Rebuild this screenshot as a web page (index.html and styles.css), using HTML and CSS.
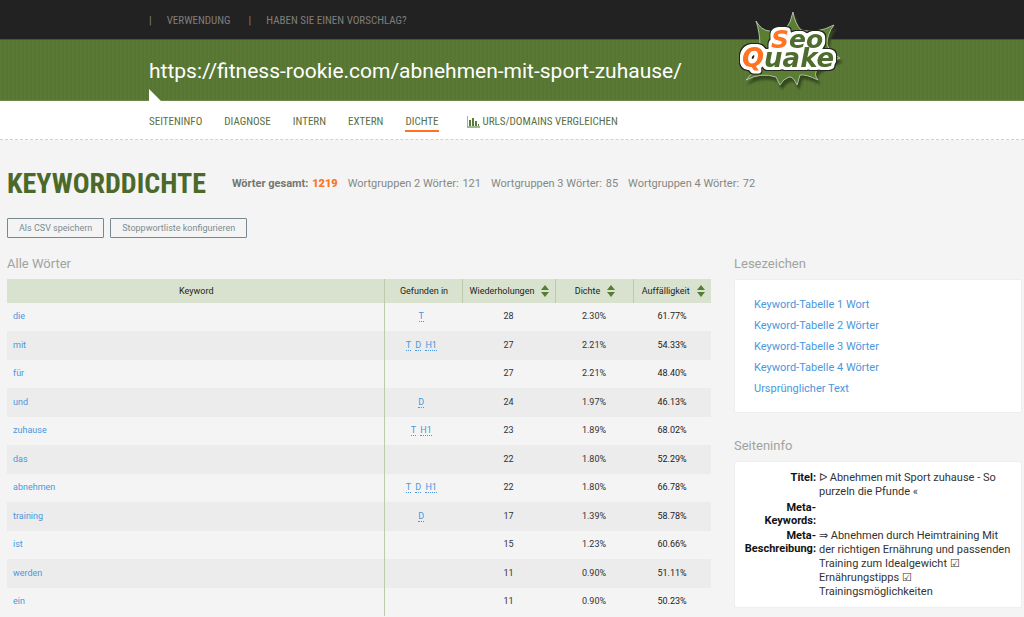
FILE: index.html
```html
<!DOCTYPE html>
<html lang="de">
<head>
<meta charset="utf-8">
<meta name="viewport" content="width=device-width, initial-scale=1">
<title>SEOquake – Keyworddichte</title>
<link rel="stylesheet" href="styles.css">
</head>
<body>
<header class="site-header">
  <nav class="top-links" aria-label="Hilfe">
    <span class="divider">|</span><a href="#verwendung">Verwendung</a>
    <span class="divider">|</span><a href="#vorschlag">Haben Sie einen Vorschlag?</a>
  </nav>
  <div class="banner">
    <p class="page-url">https://fitness-rookie.com/abnehmen-mit-sport-zuhause/</p>
  </div>
  <a class="logo" href="#start" aria-label="SeoQuake">
    <svg viewBox="0 0 112 88" width="112" height="88">
      <defs>
        <filter id="outline" x="-15%" y="-20%" width="130%" height="140%" color-interpolation-filters="sRGB">
          <feMorphology in="SourceAlpha" operator="dilate" radius="2"/>
          <feGaussianBlur stdDeviation="1"/>
          <feComponentTransfer result="edge"><feFuncA type="linear" slope="5" intercept="-0.5"/></feComponentTransfer>
          <feMorphology in="edge" operator="dilate" radius="1" result="rim"/>
          <feFlood flood-color="#22261c"/><feComposite in2="rim" operator="in" result="dark"/>
          <feFlood flood-color="#fff"/><feComposite in2="edge" operator="in" result="white"/>
          <feMerge><feMergeNode in="dark"/><feMergeNode in="white"/><feMergeNode in="SourceGraphic"/></feMerge>
        </filter>
      </defs>
      <path class="burst" d="M23 13Q28 22 36 23L52 22Q58 15 60 4Q62 16 68 22Q84 26 101 17Q94 26 94 36Q97 46 107 50Q96 54 85 61Q80 66 85 72Q73 66 67 67L64 77Q60 68 56 69Q50 71 47 77L43 69Q28 64 13 72Q19 67 21 60L27 40Q27 24 23 13Z"/>
      <g class="logo-words" filter="url(#outline)"><text x="38" y="40" class="logo-seo"><tspan class="accent">S</tspan>eo</text><text x="9" y="59" class="logo-quake"><tspan class="accent">Q</tspan>uake</text></g>
    </svg>
  </a>
  <nav class="tabs" aria-label="Bereiche">
    <a href="#seiteninfo">Seiteninfo</a>
    <a href="#diagnose">Diagnose</a>
    <a href="#intern">Intern</a>
    <a href="#extern">Extern</a>
    <a class="active" href="#dichte" aria-current="page">Dichte</a>
    <a class="compare" href="#vergleichen"><svg viewBox="0 0 13 12" width="13" height="12" aria-hidden="true"><path class="chart-axis" d="M0 0h1v10h12v2H0z"/><path d="M2 4h2v6H2zM5 2h2v8H5zM8 5h2v5H8zM11 8h1v2h-1z"/></svg>URLs/Domains vergleichen</a>
  </nav>
</header>
<main class="content">
  <div class="heading">
    <h1>Keyworddichte</h1>
    <ul class="totals">
      <li class="total-all">Wörter gesamt: <b>1219</b></li>
      <li>Wortgruppen 2 Wörter: <span>121</span></li>
      <li>Wortgruppen 3 Wörter: <span>85</span></li>
      <li>Wortgruppen 4 Wörter: <span>72</span></li>
    </ul>
  </div>
  <div class="actions">
    <button type="button">Als CSV speichern</button>
    <button type="button">Stoppwortliste konfigurieren</button>
  </div>
  <div class="columns">
    <section>
      <h2>Alle Wörter</h2>
      <table class="keywords">
        <colgroup><col><col class="c-found"><col class="c-repeat"><col class="c-value"><col class="c-value"></colgroup>
        <thead><tr>
          <th scope="col">Keyword</th>
          <th scope="col">Gefunden in</th>
          <th scope="col"><button type="button">Wiederholungen<svg viewBox="0 0 8 12" width="8" height="12" aria-hidden="true"><path d="M4 0 8 5H0zM0 7h8l-4 5z"/></svg></button></th>
          <th scope="col"><button type="button">Dichte<svg viewBox="0 0 8 12" width="8" height="12" aria-hidden="true"><path d="M4 0 8 5H0zM0 7h8l-4 5z"/></svg></button></th>
          <th scope="col"><button type="button">Auffälligkeit<svg viewBox="0 0 8 12" width="8" height="12" aria-hidden="true"><path d="M4 0 8 5H0zM0 7h8l-4 5z"/></svg></button></th>
        </tr></thead>
        <tbody>
          <tr><td><a href="#die">die</a></td><td><abbr title="Titel">T</abbr></td><td>28</td><td>2.30%</td><td>61.77%</td></tr>
          <tr><td><a href="#mit">mit</a></td><td><abbr title="Titel">T</abbr> <abbr title="Beschreibung">D</abbr> <abbr title="Überschrift">H1</abbr></td><td>27</td><td>2.21%</td><td>54.33%</td></tr>
          <tr><td><a href="#fuer">für</a></td><td></td><td>27</td><td>2.21%</td><td>48.40%</td></tr>
          <tr><td><a href="#und">und</a></td><td><abbr title="Beschreibung">D</abbr></td><td>24</td><td>1.97%</td><td>46.13%</td></tr>
          <tr><td><a href="#zuhause">zuhause</a></td><td><abbr title="Titel">T</abbr> <abbr title="Überschrift">H1</abbr></td><td>23</td><td>1.89%</td><td>68.02%</td></tr>
          <tr><td><a href="#das">das</a></td><td></td><td>22</td><td>1.80%</td><td>52.29%</td></tr>
          <tr><td><a href="#abnehmen">abnehmen</a></td><td><abbr title="Titel">T</abbr> <abbr title="Beschreibung">D</abbr> <abbr title="Überschrift">H1</abbr></td><td>22</td><td>1.80%</td><td>66.78%</td></tr>
          <tr><td><a href="#training">training</a></td><td><abbr title="Beschreibung">D</abbr></td><td>17</td><td>1.39%</td><td>58.78%</td></tr>
          <tr><td><a href="#ist">ist</a></td><td></td><td>15</td><td>1.23%</td><td>60.66%</td></tr>
          <tr><td><a href="#werden">werden</a></td><td></td><td>11</td><td>0.90%</td><td>51.11%</td></tr>
          <tr><td><a href="#ein">ein</a></td><td></td><td>11</td><td>0.90%</td><td>50.23%</td></tr>
        </tbody>
      </table>
    </section>
    <aside>
      <h2>Lesezeichen</h2>
      <ul class="card bookmarks">
        <li><a href="#t1">Keyword-Tabelle 1 Wort</a></li>
        <li><a href="#t2">Keyword-Tabelle 2 Wörter</a></li>
        <li><a href="#t3">Keyword-Tabelle 3 Wörter</a></li>
        <li><a href="#t4">Keyword-Tabelle 4 Wörter</a></li>
        <li><a href="#text">Ursprünglicher Text</a></li>
      </ul>
      <h2>Seiteninfo</h2>
      <dl class="card info">
        <dt>Titel:</dt><dd>ᐅ Abnehmen mit Sport zuhause - So purzeln die Pfunde «</dd>
        <dt>Meta-Keywords:</dt><dd></dd>
        <dt>Meta-Beschreibung:</dt><dd>⇒ Abnehmen durch Heimtraining Mit der richtigen Ernährung und passenden Training zum Idealgewicht ☑ Ernährungstipps ☑ Trainingsmöglichkeiten</dd>
      </dl>
    </aside>
  </div>
</main>
</body>
</html>
```
FILE: styles.css
```css
* { box-sizing: border-box; }
body {
  margin: 0;
  background: #f4f4f4;
  color: #333;
  font: 11px/14px Roboto, "Liberation Sans", sans-serif;
}
a { color: #4a97dd; text-decoration: none; }
ul, dl, dd, h1, h2, p { margin: 0; padding: 0; list-style: none; }
button { font: inherit; color: inherit; cursor: pointer; }

.site-header { position: relative; background: #fff; border-bottom: 1px dashed #d0d0d0; }
.top-links, .tabs, h1 {
  font-family: "Roboto Condensed", "Liberation Sans Narrow", Roboto, sans-serif;
  text-transform: uppercase;
}
.top-links {
  display: flex;
  align-items: center;
  height: 39px;
  padding: 2px 149px 0;
  background: #222;
  color: #85817c;
}
.top-links a { color: #807e7b; margin: 0 18px 0 15px; }
.banner {
  position: relative;
  padding: 18px 149px 15px;
  background: repeating-linear-gradient(90deg, #5a7935 0 2px, #577533 2px 4px);
  border-top: 1px solid #435b27;
  border-bottom: 1px solid #6d8a4c;
}
.banner::after {
  content: "";
  position: absolute;
  left: 149px;
  bottom: -1px;
  border-left: 12px solid #fff;
  border-top: 12px solid transparent;
}
.page-url { color: #fff; font-size: 21px; line-height: 27px; }
.logo { position: absolute; left: 733px; top: 8px; line-height: 0; }
.burst { fill: #5a7f33; stroke: #b5bdac; stroke-width: 1; filter: drop-shadow(2px 4px 1px #34481e); }
.logo text { font-family: "DejaVu Sans", sans-serif; font-weight: 700; font-style: italic; }
.logo-words { fill: #4d6c2d; }
.logo-seo { font-size: 25px; }
.logo-quake { font-size: 26px; }
.logo-words .accent { fill: #ff7321; }

.tabs { display: flex; gap: 22px; padding: 14px 149px 7px; }
.tabs a { color: #5a7044; padding-bottom: 1px; border-bottom: 2px solid transparent; }
.tabs .active { border-color: #ff7321; }
.tabs .compare { display: flex; gap: 3px; margin-left: 6px; }
.tabs svg { margin-top: 1px; fill: #587c3a; }
.tabs .chart-axis { fill: #a2b691; }

.content { padding: 28px 2px 0 7px; }
.heading { display: flex; align-items: center; gap: 26px; }
h1 { color: #4a692a; font-size: 28px; line-height: 32px; }
.totals { display: flex; gap: 10px; color: #858883; }
.total-all { font-weight: 700; color: #747770; }
.total-all b { color: #ff7321; }
.totals b, .totals span { margin-left: 1px; }
.actions { display: flex; gap: 6px; margin-top: 18px; }
.actions button {
  padding: 2px 11px;
  border: 1px solid #78898e;
  border-radius: 1px;
  background: transparent;
  color: #7b8c92;
  font-size: 9px;
}
.columns { display: grid; grid-template-columns: minmax(0, 1fr) 288px; gap: 23px; margin-top: 18px; }
h2 { color: #a1a3a0; font-size: 13px; font-weight: 400; line-height: 16px; }

.keywords { width: 100%; margin-top: 7px; table-layout: fixed; border-collapse: collapse; text-align: center; font-size: 9px; }
.c-found, .c-value { width: 78px; }
.c-repeat { width: 93px; }
.keywords th { height: 24px; padding: 0 0 0 2px; background: #d9e2cf; font-weight: 400; color: #222; }
.keywords th + th { border-left: 1px solid #bdcbad; }
.keywords th button { display: flex; justify-content: center; align-items: center; gap: 7px; width: 100%; padding: 0; border: 0; background: none; }
.keywords svg { flex: none; fill: #567d34; }
.keywords td { height: 28px; padding: 0 0 2px; }
.keywords tr:nth-child(even) td { height: 29px; background: #ececec; }
.keywords td:first-child { padding-left: 6px; text-align: left; border-right: 1px solid #bdcbad; }
.keywords td:nth-child(2) { padding-right: 4px; }
.keywords abbr { margin: 0 1px; color: #4a97dd; text-decoration: none; border-bottom: 1px dotted #4a97dd; }
.keywords td:nth-child(5) { color: #222; }

.card { margin-top: 7px; background: #fff; border: 1px solid #eee; border-radius: 2px; }
.bookmarks { padding: 14px 19px 13px; line-height: 21px; margin-bottom: 25px; }
.info {
  display: grid;
  grid-template-columns: 72px 1fr;
  gap: 2px 3px;
  padding: 9px 9px 8px;
}
.info dt { color: #111; font-weight: 700; line-height: 13px; text-align: right; }
```
